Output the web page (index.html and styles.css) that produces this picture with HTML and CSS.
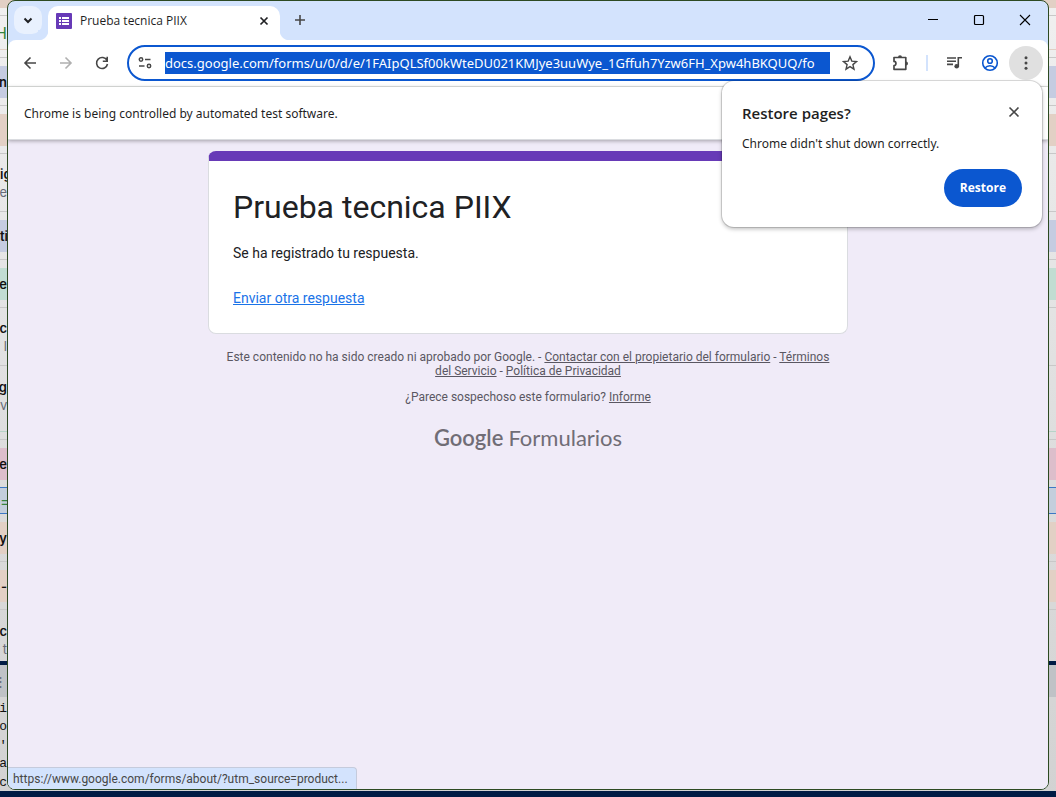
FILE: index.html
```html
<!DOCTYPE html>
<html lang="es">
<head>
<meta charset="utf-8">
<meta name="viewport" content="width=device-width, initial-scale=1">
<title>Prueba tecnica PIIX</title>
<link rel="stylesheet" href="styles.css">
</head>
<body>
<div class="desktop">
  <div class="strip peach h8"></div>
  <div class="strip line h8"></div>
  <div class="strip h34 line-peach"><span class="peek green">H</span></div>
  <div class="strip line h8"></div>
  <div class="strip h8"></div>
  <div class="strip blue h32"><span class="peek">n</span></div>
  <div class="strip line h8"></div>
  <div class="strip h8"></div>
  <div class="strip peach h32"></div>
  <div class="strip line h8"></div>
  <div class="strip line h58 pair"><span class="peek start">ig</span><span class="peek small">e</span></div>
  <div class="strip h8"></div>
  <div class="strip blue h32"><span class="peek start">tic</span></div>
  <div class="strip line h8"></div>
  <div class="strip h8"></div>
  <div class="strip mint h32"><span class="peek">e</span></div>
  <div class="strip line h8"></div>
  <div class="strip line h58 pair"><span class="peek">c</span><span class="peek small">- l</span></div>
  <div class="strip line-mint h66 pair"><span class="peek">g</span><span class="peek small start">va</span></div>
  <div class="strip line h8"></div>
  <div class="strip h8"></div>
  <div class="strip pink h32"><span class="peek">e</span></div>
  <div class="strip h7"></div>
  <div class="strip selected h27"><span class="peek green start">=</span></div>
  <div class="strip h8"></div>
  <div class="strip peach h32"><span class="peek">ry</span></div>
  <div class="strip line h8"></div>
  <div class="strip h8"></div>
  <div class="strip peach h32"><span class="peek">-</span></div>
  <div class="strip line h8"></div>
  <div class="strip h51 pair"><span class="peek">c</span><span class="peek small">n t</span></div>
  <div class="strip navy h4"></div>
  <div class="strip gray h32"><span class="peek small">⋮</span></div>
  <div class="strip code"><span class="peek mono">i</span><span class="peek mono">o</span><span class="peek mono">'</span><span class="peek mono">a</span><span class="peek mono">c</span></div>
  <div class="strip navy h6"></div>
</div>

<div class="window">
  <header class="tabstrip">
    <button class="tab-search" aria-label="Search tabs">
      <svg width="12" height="12" viewBox="0 0 12 12"><path d="M2.500 4.500 6 8l3.500-3.500" fill="none" stroke="#202124" stroke-width="2"/></svg>
    </button>
    <div class="tab">
      <svg width="16" height="16" viewBox="0 0 16 16"><rect width="16" height="16" rx="1" fill="#673ab7"/><path d="M3 4h2v2H3zM3 7h2v2H3zM3 10h2v2H3zM6 4h7v2H6zM6 7h7v2H6zM6 10h7v2H6z" fill="#fff"/></svg>
      <span class="tab-title">Prueba tecnica PIIX</span>
      <button class="tab-close" aria-label="Close tab"><svg width="16" height="16" viewBox="0 0 16 16"><path d="m4.500 4.500 7 7m0-7-7 7" stroke="#202124" stroke-width="1.700"/></svg></button>
    </div>
    <button class="new-tab" aria-label="New tab"><svg width="16" height="16" viewBox="0 0 16 16"><path d="M8 3v10M3 8h10" stroke="#474747" stroke-width="1.600"/></svg></button>
    <div class="controls">
      <button aria-label="Minimize"><svg width="12" height="12" viewBox="0 0 12 12"><path d="M1 5.500h10" stroke="#000"/></svg></button>
      <button aria-label="Maximize"><svg width="12" height="12" viewBox="0 0 12 12"><rect x="1.500" y="1.500" width="9" height="9" rx="1" fill="none" stroke="#000" stroke-width="1.200"/></svg></button>
      <button aria-label="Close"><svg width="12" height="12" viewBox="0 0 12 12"><path d="m1 1 10 10M11 1 1 11" stroke="#000" stroke-width="1.100"/></svg></button>
    </div>
  </header>

  <div class="toolbar">
    <button class="tool" aria-label="Back"><svg width="16" height="16" viewBox="0 0 16 16"><path d="M14 8H3m5.500-5.500L3 8l5.500 5.500" fill="none" stroke="#474747" stroke-width="1.600"/></svg></button>
    <button class="tool" aria-label="Forward" disabled><svg width="16" height="16" viewBox="0 0 16 16"><path d="M2 8h11M7.500 2.500 13 8l-5.500 5.500" fill="none" stroke="#b0b0b0" stroke-width="1.600"/></svg></button>
    <button class="tool" aria-label="Reload"><svg width="16" height="16" viewBox="0 0 16 16"><path d="M13 5.500A5.500 5.500 0 1 0 13.500 9M13.200 1.800v4.400H8.800" fill="none" stroke="#474747" stroke-width="1.600"/></svg></button>
    <div class="omnibox">
      <button class="site" aria-label="Site information"><svg width="16" height="16" viewBox="0 0 16 16"><g fill="none" stroke="#474747" stroke-width="1.500"><circle cx="4" cy="4.500" r="1.700"/><path d="M8 4.500h5.500M2 11h5.500"/><circle cx="12" cy="11" r="1.700"/></g></svg></button>
      <input class="url" type="text" aria-label="Address" value="docs.google.com/forms/u/0/d/e/1FAIpQLSf00kWteDU021KMJye3uuWye_1Gffuh7Yzw6FH_Xpw4hBKQUQ/fo">
      <button class="star" aria-label="Bookmark this tab"><svg width="16" height="16" viewBox="0 0 16 16"><path d="m8 1.800 1.800 4.300 4.700.4-3.600 3.100 1.100 4.600L8 11.700l-4 2.500 1.100-4.600L1.500 6.500l4.700-.4z" fill="none" stroke="#474747" stroke-width="1.400"/></svg></button>
    </div>
    <button class="tool ext" aria-label="Extensions"><svg width="18" height="18" viewBox="0 0 18 18"><path d="M2 3.500h11.800v11.800H2v-3.700c2.600 0 2.600-4.200 0-4.200z" fill="none" stroke="#474747" stroke-width="1.700" stroke-linejoin="round"/><path d="M6 3.200a2 2 0 0 1 4 0M14 7.400a2 2 0 0 1 0 4" fill="#474747"/></svg></button>
    <span class="divider"></span>
    <button class="tool media" aria-label="Media controls"><svg width="16" height="16" viewBox="0 0 16 16"><path d="M1 3h9M1 6.200h9M1 9.400h6M12.300 11V2.700H16" fill="none" stroke="#474747" stroke-width="1.600"/><circle cx="10.700" cy="11.200" r="2.300" fill="#474747"/></svg></button>
    <button class="tool" aria-label="Profile"><svg width="18" height="18" viewBox="0 0 18 18"><g fill="none" stroke="#0b57d0" stroke-width="1.600"><circle cx="9" cy="9" r="7.300"/><circle cx="9" cy="7" r="2.300"/><path d="M4 14c2.500-3 7.500-3 10 0"/></g></svg></button>
    <button class="tool menu" aria-label="Menu"><svg width="16" height="16" viewBox="0 0 16 16" fill="#474747"><circle cx="8" cy="2.800" r="1.500"/><circle cx="8" cy="8" r="1.500"/><circle cx="8" cy="13.200" r="1.500"/></svg></button>
  </div>

  <div class="infobar">Chrome is being controlled by automated test software.</div>

  <main class="page">
    <section class="card">
      <h1>Prueba tecnica PIIX</h1>
      <p>Se ha registrado tu respuesta.</p>
      <a href="#">Enviar otra respuesta</a>
    </section>
    <footer class="legal">
      <p>Este contenido no ha sido creado ni aprobado por Google. - <a href="#">Contactar con el propietario del formulario</a> - <a href="#">Términos del Servicio</a> - <a href="#">Política de Privacidad</a></p>
      <p>¿Parece sospechoso este formulario? <a href="#">Informe</a></p>
      <a class="brand" href="#"><span class="google">Google</span><span>Formularios</span></a>
    </footer>
  </main>

  <aside class="restore" role="dialog" aria-labelledby="restore-title">
    <div class="restore-head">
      <h2 id="restore-title">Restore pages?</h2>
      <button class="dismiss" aria-label="Dismiss"><svg width="16" height="16" viewBox="0 0 16 16"><path d="m3.500 2.500 9 9M12.500 2.500l-9 9" stroke="#474747" stroke-width="1.600"/></svg></button>
    </div>
    <p>Chrome didn't shut down correctly.</p>
    <button class="restore-btn">Restore</button>
  </aside>

  <div class="status">https://www.google.com/forms/about/?utm_source=product...</div>
</div>
</body>
</html>
```
FILE: styles.css
```css
* { box-sizing: border-box; }
body { margin: 0; height: 100vh; overflow: hidden; position: relative; font-family: "Noto Sans", "Open Sans", sans-serif; color: #1f1f1f; }
button { border: 0; padding: 0; background: none; font: inherit; display: flex; align-items: center; justify-content: center; flex: none; }
svg { display: block; flex: none; }
h1, h2, p { margin: 0; }

/* Sheet behind the browser window */
.desktop { display: flex; flex-direction: column; height: 100vh; background: linear-gradient(#f0f0f0, #dcdcdc 60%, #d2d2d2); }
.strip { display: flex; flex-direction: column; justify-content: center; flex: none; }
.h4 { height: 4px; } .h6 { height: 6px; } .h7 { height: 7px; } .h8 { height: 8px; }
.h27 { height: 27px; } .h32 { height: 32px; } .h34 { height: 34px; }
.h51 { height: 51px; } .h58 { height: 58px; } .h66 { height: 66px; }
.h51, .h66 { justify-content: flex-start; padding-top: 12px; }
.line { border-bottom: 1px solid #c8c8c8; }
.line-peach { border-bottom: 1px solid #e0cfc4; }
.line-mint { border-bottom: 1px solid #b7d3c7; }
.peach { background: #e2d0c5; }
.blue { background: #c5cce1; }
.mint { background: #c1ddd2; }
.pink { background: #dcbecb; }
.gray { background: #bfc2c6; }
.navy { background: #001b44; }
.selected { background: #c3cedc; border: solid #3d78c4; border-width: 1px 0; }
.peek { width: 7px; overflow: hidden; display: flex; justify-content: flex-end; font: 600 13px/18px Inter, sans-serif; white-space: nowrap; color: #111; }
.start { justify-content: flex-start; }
.small { font-weight: 400; color: #666b78; }
.green { font-weight: 400; font-size: 16px; color: #34843e; }
.mono { font: 13px/20px "Liberation Mono", monospace; }
.code { flex: 1 1 0; min-height: 0; justify-content: flex-start; padding-top: 2px; overflow: hidden; }

.window { position: absolute; inset: 0 7px 7px; display: flex; flex-direction: column; border: 1px solid #2d4a22; border-radius: 8px; overflow: hidden; background: #d3e3fd; }

.tabstrip { height: 39px; display: flex; align-items: flex-start; padding: 5px 0 0 6px; flex: none; }
.tab-search { width: 28px; height: 28px; border-radius: 10px; background: #e9f1fe; }
.tab { position: relative; display: flex; align-items: center; gap: 8px; width: 232px; height: 34px; margin-left: 6px; padding: 0 8px 5px; border-radius: 10px 10px 0 0; background: #fff; }
.tab::before, .tab::after { content: ""; position: absolute; bottom: 0; width: 10px; height: 10px; }
.tab::before { right: 100%; background: radial-gradient(circle at 0 0, #d3e3fd 10px, #fff 11px); }
.tab::after { left: 100%; background: radial-gradient(circle at 100% 0, #d3e3fd 10px, #fff 11px); }
.tab-title { flex: 1; font: 12px/16px "Open Sans", sans-serif; white-space: nowrap; }
.new-tab { width: 28px; height: 28px; margin-left: 6px; }
.controls { display: flex; margin-left: auto; }
.controls button { width: 46px; height: 28px; }

.toolbar { height: 47px; display: flex; align-items: center; padding: 0 5px 0 4px; border-bottom: 1px solid #e1e3e1; border-radius: 8px 8px 0 0; background: #fff; flex: none; }
.tool { width: 36px; height: 34px; border-radius: 50%; }
.menu { width: 34px; margin-left: 1px; background: #e0e0e0; }
.omnibox { flex: 1; min-width: 0; height: 36px; display: flex; align-items: center; margin-left: 7px; padding: 0 15px 0 8px; border: 2px solid #0b57d0; border-radius: 18px; background: #fff; }
.site { width: 16px; margin-right: 12px; }
.url { flex: 1; min-width: 0; height: 22px; border: 0; padding: 0; outline: 0; background: #0b57d0; color: #fff; font: 13px/22px "Noto Sans", sans-serif; }
.star { width: 16px; margin-left: 12px; }
.ext { margin-left: 8px; }
.divider { width: 2px; height: 16px; margin: 0 8px 0 7px; background: #d3e3fd; }

.infobar { display: flex; align-items: center; min-height: 53px; padding: 1px 16px 0; border-bottom: 1px solid #dadce0; background: #fff; box-shadow: 0 1px 4px #0005; font-size: 12px; line-height: 16px; z-index: 1; flex: none; }

.page { flex: 1; padding: 11px 16px; background: #f0ebf8; font-family: Roboto, sans-serif; }
.card { max-width: 640px; margin: 0 auto; padding: 25px 24px 25px; border: 1px solid #dadce0; border-top: 10px solid #673ab7; border-radius: 8px; background: #fff; font-size: 14px; line-height: 20px; color: #202124; }
.card h1 { margin-bottom: 15px; font-size: 32px; line-height: 42px; font-weight: 400; }
.card p { margin-bottom: 25px; }
.card a { color: #1a73e8; }
.legal { max-width: 640px; margin: 0 auto; padding: 16px 16px 0; text-align: center; font-size: 12px; line-height: 14px; color: #5a5762; }
.legal p { margin-bottom: 12px; }
.legal a { color: inherit; }
.legal .brand { display: inline-flex; gap: 5px; margin-top: 8px; font: 22px/28px Lato, sans-serif; color: #706d76; text-decoration: none; }
.google { font-weight: 600; }

.restore { position: absolute; z-index: 3; top: 80px; right: 6px; width: 320px; padding: 20px; border-radius: 12px; background: #fff; box-shadow: 0 0 0 1px #0002, 0 2px 4px #0004; display: flex; flex-direction: column; }
.restore-head { display: flex; align-items: center; justify-content: space-between; }
.restore h2 { font: 600 15px/24px "Open Sans", sans-serif; }
.restore p { margin: 9px 0 15px; font-size: 12px; line-height: 20px; }
.restore-btn { align-self: flex-end; height: 38px; padding: 0 16px; border-radius: 19px; background: #0b57d0; color: #fff; font: 700 12px/16px "Open Sans", sans-serif; }

.status { position: absolute; z-index: 2; left: 0; bottom: 0; padding: 2px 8px 1px 5px; border: solid #c5cbdc; border-width: 1px 1px 0 0; border-radius: 0 4px 0 0; background: #d3e3fd; color: #474747; font: 12px/18px Roboto, sans-serif; }
```
